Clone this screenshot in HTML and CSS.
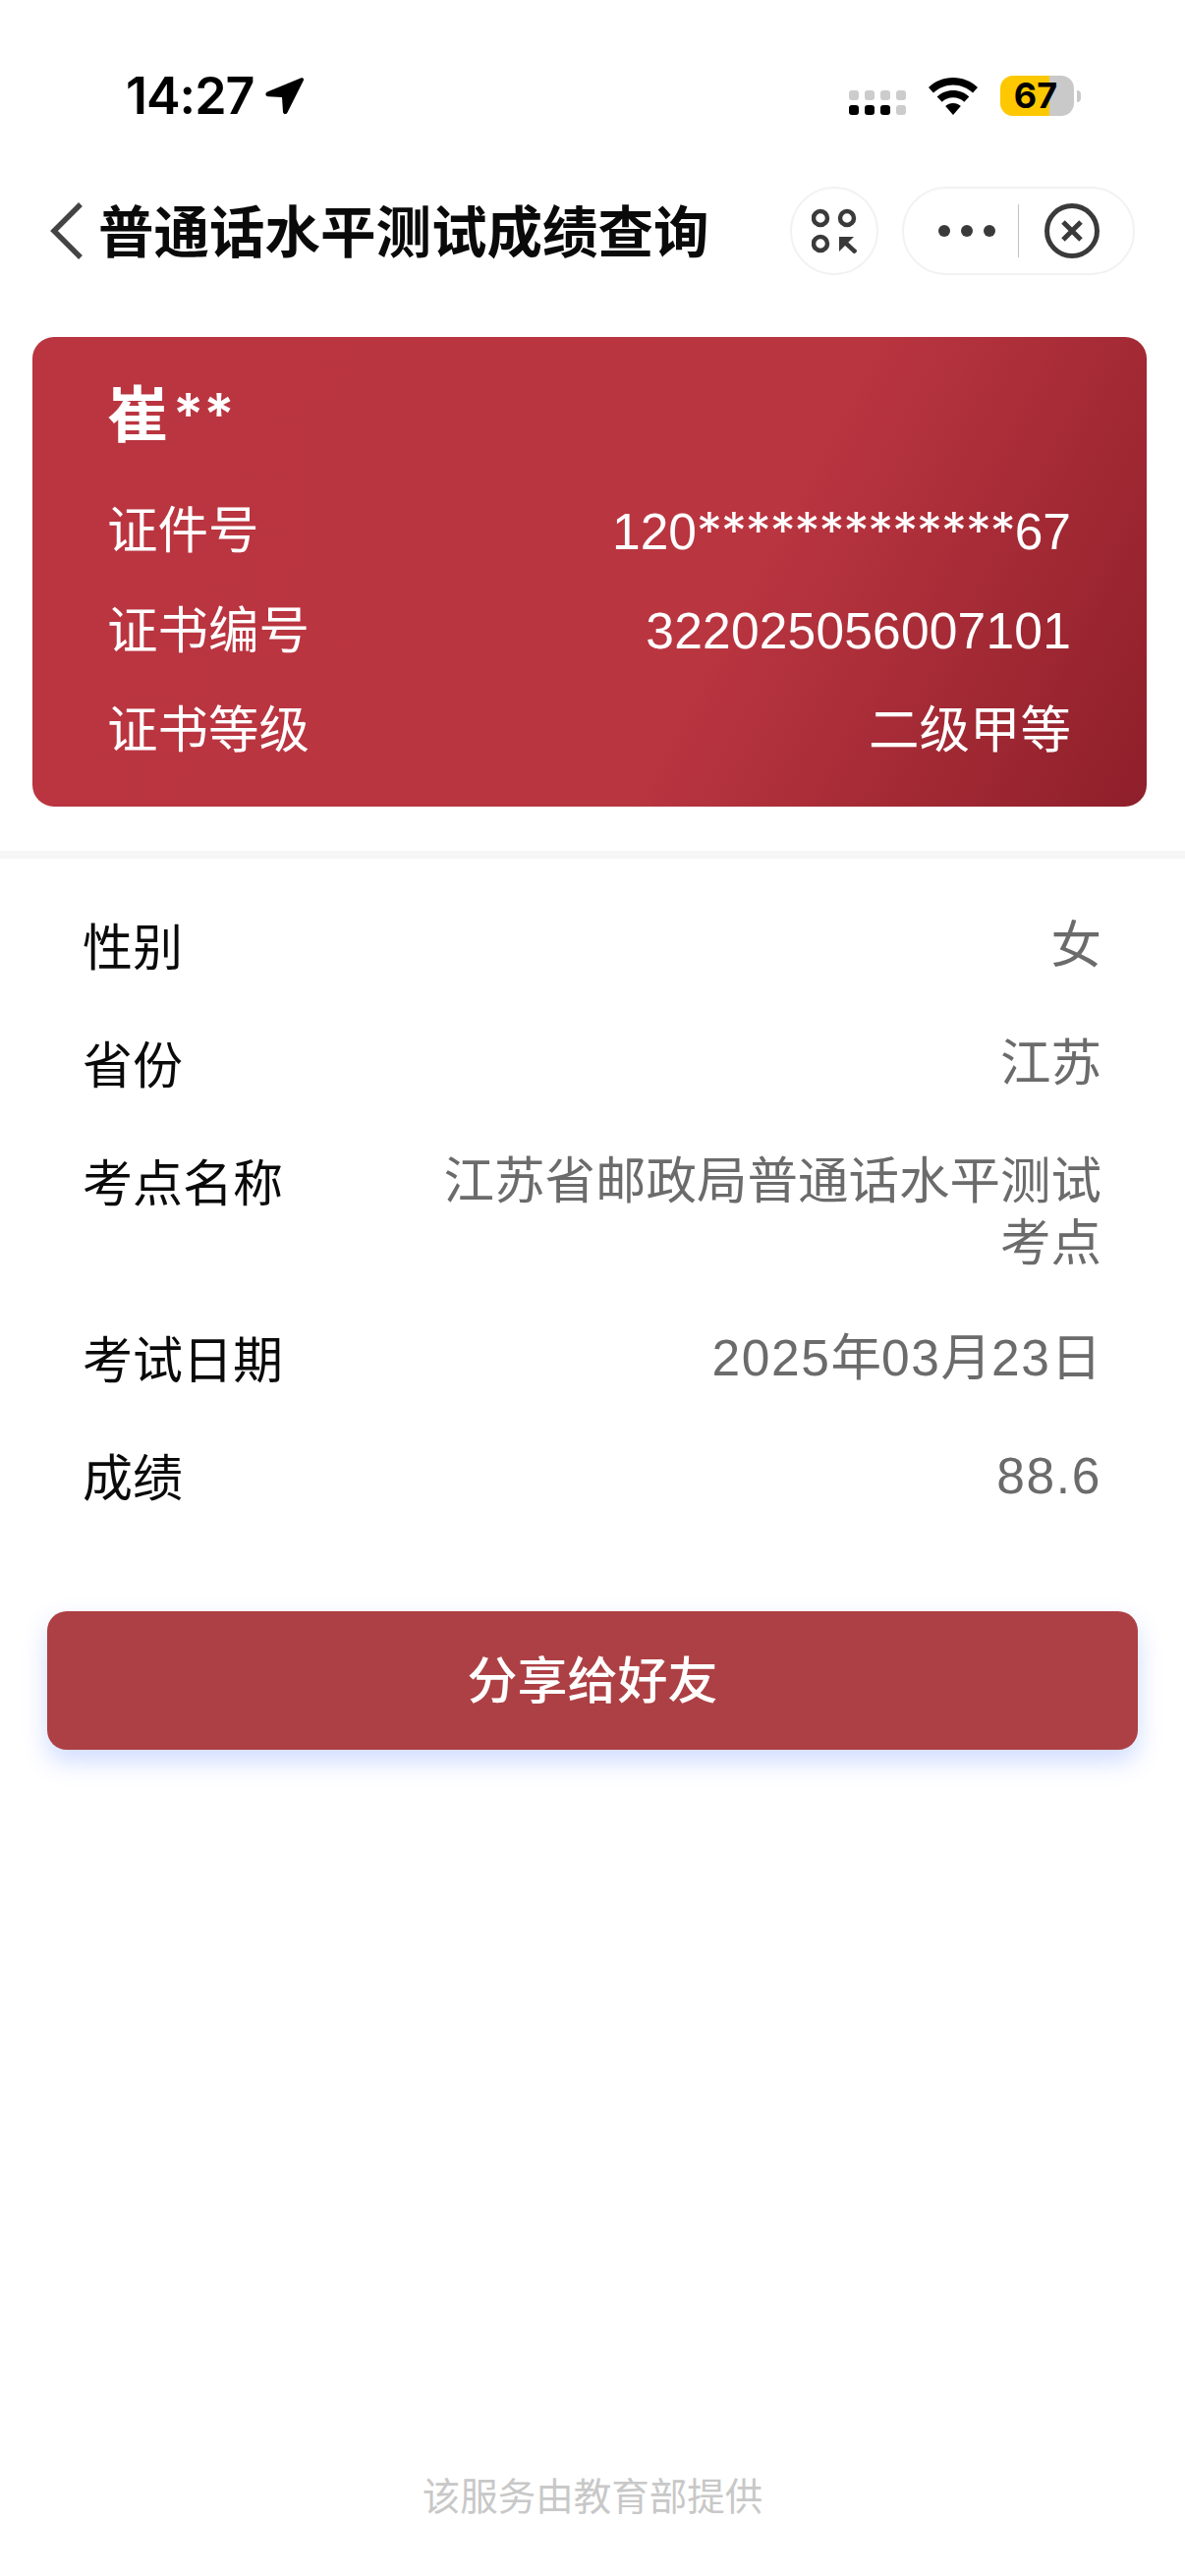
FILE: index.html
```html
<!DOCTYPE html>
<html lang="zh-CN">
<head>
  <meta charset="UTF-8">
  <title>普通话水平测试成绩查询</title>
  <link rel="stylesheet" href="styles.css">
</head>
<body>
  <div class="status-bar">
    <div class="status-left">
      <span class="clock">14:27</span>
      <svg class="loc-arrow" viewBox="0 0 40 40"><path d="M36 1.500 2 15.500C-.5 17 0 20 3 20.200L17 21l1 15c.3 2.500 3.500 2.800 4.500.5L38.800 4c1-2-.8-3.300-2.800-2.500z"/></svg>
    </div>
    <div class="status-right">
      <div class="signal">
        <i class="off"></i><i class="off"></i><i class="off"></i><i class="off"></i>
        <i></i><i></i><i></i><i class="off"></i>
      </div>
      <svg class="wifi" viewBox="0 0 52 38"><path d="M26 0C16 0 7.500 3.800 1 10l5 5.500C11.300 10.500 18.300 7.500 26 7.500s14.700 3 20 8l5-5.500C44.500 3.800 36 0 26 0z"/><path d="M26 13c-6.300 0-12 2.400-16.300 6.400l5 5.400c3-2.800 7-4.500 11.300-4.500s8.300 1.700 11.300 4.500l5-5.400C38 15.400 32.300 13 26 13z"/><path d="M26 26c-3 0-5.700 1.100-7.800 3L26 38l7.800-9c-2.100-1.900-4.800-3-7.800-3z"/></svg>
      <div class="battery">
        <div class="battery-body"><span class="battery-num">67</span></div>
        <div class="battery-nub"></div>
      </div>
    </div>
  </div>

  <div class="nav-bar">
    <svg class="back" viewBox="0 0 36 58"><path d="M32 2 5 29l27 27"/></svg>
    <h1 class="nav-title">普通话水平测试成绩查询</h1>
    <div class="round-btn">
      <svg class="scan-icon" viewBox="0 0 46 46">
        <circle cx="9" cy="10" r="7"/>
        <circle cx="36" cy="10" r="7"/>
        <circle cx="9" cy="36" r="7"/>
        <path d="M28 29h15L28 44z" class="scan-head"/>
        <path d="M31 32l14 13"/>
      </svg>
    </div>
    <div class="capsule">
      <div class="capsule-dots"><i></i><i></i><i></i></div>
      <div class="capsule-line"></div>
      <svg class="close-icon" viewBox="0 0 56 56">
        <circle cx="28" cy="28" r="25.500"/>
        <path d="M19 19l18 18M37 19 19 37"/>
      </svg>
    </div>
  </div>

  <div class="cert-card">
    <div class="cert-name">崔<span class="stars">**</span></div>
    <div class="cert-row"><span>证件号</span><span>120<span class="id-stars">*************</span>67</span></div>
    <div class="cert-row"><span>证书编号</span><span class="cert-num">322025056007101</span></div>
    <div class="cert-row"><span>证书等级</span><span>二级甲等</span></div>
  </div>

  <div class="divider"></div>

  <ul class="info-list">
    <li><span class="info-label">性别</span><span class="info-value">女</span></li>
    <li><span class="info-label">省份</span><span class="info-value">江苏</span></li>
    <li><span class="info-label">考点名称</span><span class="info-value">江苏省邮政局普通话水平测试考点</span></li>
    <li><span class="info-label">考试日期</span><span class="info-value"><span class="num">2025</span>年<span class="num">03</span>月<span class="num">23</span>日</span></li>
    <li><span class="info-label">成绩</span><span class="info-value"><span class="num">88.6</span></span></li>
  </ul>

  <a class="share-btn">分享给好友</a>

  <div class="footer-note">该服务由教育部提供</div>
</body>
</html>
```

FILE: styles.css
```css
* { box-sizing: border-box; }
html, body { margin: 0; padding: 0; }
body {
  width: 1206px;
  height: 2622px;
  overflow: hidden;
  display: flex;
  flex-direction: column;
  background: #ffffff;
  color: #111111;
  font-family: "Liberation Sans", "Noto Sans CJK SC", sans-serif;
}

/* status bar */
.status-bar {
  height: 190px;
  padding: 78px 106px 0 128px;
  display: flex;
  justify-content: space-between;
  align-items: flex-start;
}
.status-left { display: flex; align-items: center; height: 40px; }
.clock {
  font-family: Inter, sans-serif;
  font-size: 52px;
  font-weight: 600;
  line-height: 40px;
  color: #000;
  letter-spacing: -1px;
}
.loc-arrow { width: 40px; height: 40px; margin: -1px 0 0 11px; fill: #000; }
.status-right { display: flex; align-items: flex-start; margin-top: -1px; }
.signal {
  display: grid;
  grid-template-columns: repeat(4, 10px);
  grid-auto-rows: 10px;
  gap: 5px 6px;
  margin-top: 15px;
}
.signal i { background: #000; border-radius: 3px; }
.signal i.off { background: #cccccc; }
.wifi { width: 52px; height: 38px; margin: 2px 0 0 22px; fill: #000; }
.battery { display: flex; align-items: center; margin-left: 22px; }
.battery-body {
  width: 75px;
  height: 41px;
  border-radius: 13px;
  background: linear-gradient(90deg, #fdc800 67%, #c9c9c9 67%);
  display: flex;
  align-items: center;
  justify-content: center;
}
.battery-num {
  font-family: Inter, sans-serif;
  font-size: 36px;
  font-weight: 700;
  color: #000;
  line-height: 41px;
  margin-right: 3px;
}
.battery-nub {
  width: 4px;
  height: 12px;
  margin-left: 3px;
  background: #c9c9c9;
  border-radius: 0 4px 4px 0;
}

/* nav bar */
.nav-bar {
  height: 90px;
  padding-left: 50px;
  display: flex;
  align-items: center;
}
.back {
  width: 36px;
  height: 58px;
  fill: none;
  stroke: #444444;
  stroke-width: 5.500;
  flex: none;
}
.nav-title {
  margin: 0 0 7px 14px;
  width: 704px;
  font-size: 56.500px;
  font-weight: 700;
  color: #0a0a0a;
  white-space: nowrap;
}
.round-btn {
  width: 90px;
  height: 90px;
  border: 2px solid #f2f2f2;
  border-radius: 50%;
  display: flex;
  align-items: center;
  justify-content: center;
  flex: none;
}
.scan-icon { width: 46px; height: 46px; fill: none; stroke: #3a3a3a; stroke-width: 4.500; }
.scan-head { fill: #3a3a3a; stroke: none; }
.capsule {
  width: 237px;
  height: 90px;
  margin-left: 24px;
  border: 2px solid #f2f2f2;
  border-radius: 45px;
  display: flex;
  align-items: center;
  flex: none;
}
.capsule-dots { display: flex; gap: 11px; margin-left: 35px; width: 81px; }
.capsule-dots i { width: 12px; height: 12px; background: #3a3a3a; border-radius: 50%; }
.capsule-line { width: 1px; height: 54px; background: #c4c4c4; }
.close-icon { width: 56px; height: 56px; margin-left: 26px; fill: none; stroke: #3a3a3a; stroke-width: 5; }

/* red card */
.cert-card {
  margin: 63px 39px 0 33px;
  height: 478px;
  padding: 36px 77px 0 76px;
  border-radius: 22px;
  color: #ffffff;
  background: linear-gradient(118deg, #ba3540 0%, #b93540 62%, #8e1f2a 100%);
}
.cert-name {
  font-size: 62px;
  font-weight: 700;
  line-height: 84px;
  margin-bottom: 24px;
}
.stars { font-family: Inter, sans-serif; font-size: 58px; margin-left: 5px; vertical-align: 3px; font-weight: 600; }
.cert-row {
  display: flex;
  justify-content: space-between;
  font-size: 51.500px;
  line-height: 101px;
  font-weight: 400;
}
.cert-num { letter-spacing: 0.200px; }
.id-stars { font-family: Inter, sans-serif; letter-spacing: -0.900px; }

.divider { height: 8px; margin-top: 45px; background: #f6f6f6; }

/* details */
.info-list {
  list-style: none;
  margin: 0;
  padding: 32px 85px 0 84px;
}
.info-list li {
  display: flex;
  justify-content: space-between;
  align-items: flex-start;
  padding: 28.400px 0;
  font-size: 51px;
  line-height: 63px;
}
.info-label { color: #0a0a0a; flex: none; }
.info-value { color: #6b6b6b; width: 680px; text-align: right; margin-top: -3px; font-size: 51.500px; }
.num { letter-spacing: 1.600px; }

.share-btn {
  display: block;
  margin: 75px 48px 0;
  height: 141px;
  line-height: 143px;
  text-align: center;
  font-size: 51px;
  font-weight: 500;
  color: #ffffff;
  background: #ad4044;
  border-radius: 20px;
  box-shadow: 0 12px 24px rgba(70, 120, 255, 0.25);
}

.footer-note {
  margin-top: auto;
  padding-bottom: 58px;
  text-align: center;
  font-size: 38.500px;
  line-height: 44px;
  color: #c8c8c8;
}
```
